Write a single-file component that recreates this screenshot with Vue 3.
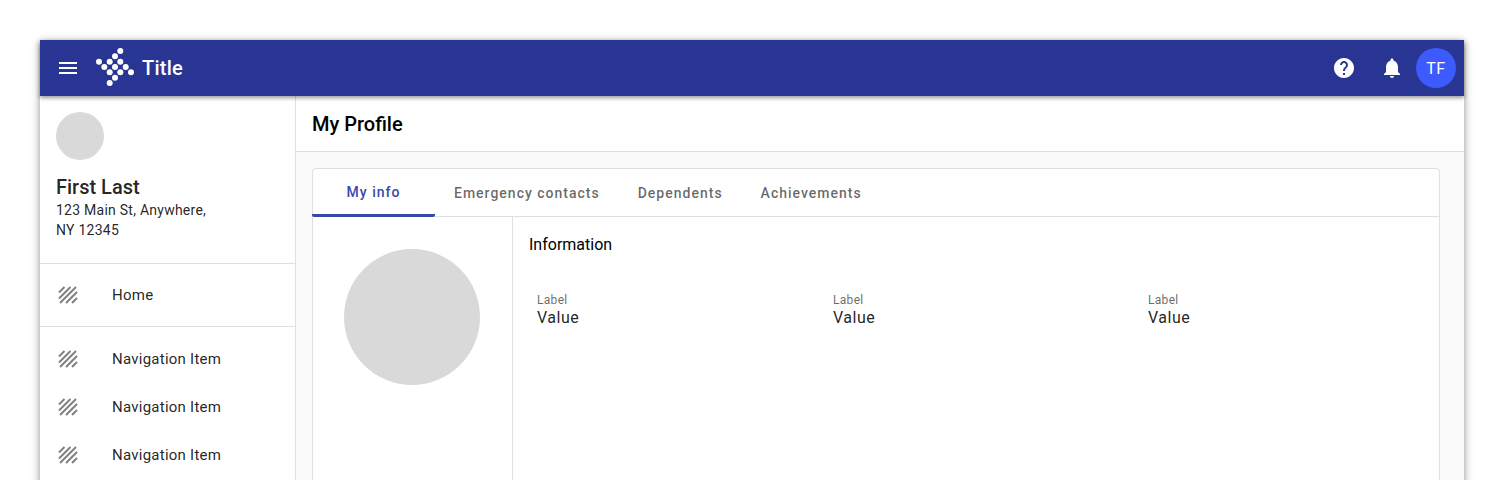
<script setup>
const navItems = ['Navigation Item', 'Navigation Item', 'Navigation Item', 'Navigation Item']
const tabs = ['My info', 'Emergency contacts', 'Dependents', 'Achievements']
const fields = [
  { label: 'Label', value: 'Value', width: '296px' },
  { label: 'Label', value: 'Value', width: '315px' },
  { label: 'Label', value: 'Value', width: '200px' }
]
const dots = [
  [24.3, 11], [19, 16.3], [13.7, 21.7], [3, 21.7], [8.3, 27], [24.3, 21.7], [29.7, 27],
  [19, 27], [13.7, 32.3], [24.3, 32.3], [19, 37.7], [13.7, 43], [35, 32.3]
]
</script>

<template>
  <div class="page">
    <div class="shell">
      <header class="topbar">
        <svg class="menu" width="24" height="24" viewBox="0 0 24 24" fill="#fff"><path d="M3 18h18v-2H3v2zm0-5h18v-2H3v2zm0-7v2h18V6H3z"/></svg>
        <svg class="logo" width="40" height="40" viewBox="0 8 40 40" fill="#fff">
          <circle v-for="(d, i) in dots" :key="i" :cx="d[0]" :cy="d[1]" r="3"/>
        </svg>
        <span class="app-title">Title</span>
        <span class="spacer"></span>
        <svg class="action" width="24" height="24" viewBox="0 0 24 24" fill="#fff"><path d="M12 2C6.48 2 2 6.48 2 12s4.48 10 10 10 10-4.48 10-10S17.52 2 12 2zm1 17h-2v-2h2v2zm2.07-7.75l-.9.92C13.45 12.9 13 13.5 13 15h-2v-.5c0-1.1.45-2.1 1.17-2.83l1.24-1.26c.37-.36.59-.86.59-1.41 0-1.1-.9-2-2-2s-2 .9-2 2H8c0-2.21 1.79-4 4-4s4 1.79 4 4c0 .88-.36 1.68-.93 2.25z"/></svg>
        <svg class="action bell" width="24" height="24" viewBox="0 0 24 24" fill="#fff"><path d="M12 22c1.1 0 2-.9 2-2h-4c0 1.1.89 2 2 2zm6-6v-5c0-3.07-1.64-5.64-4.5-6.32V4c0-.83-.67-1.5-1.5-1.5s-1.5.67-1.5 1.5v.68C7.63 5.36 6 7.92 6 11v5l-2 2v1h16v-1l-2-2z"/></svg>
        <div class="user">TF</div>
      </header>

      <div class="body">
        <aside class="sidebar">
          <section class="profile">
            <div class="profile-avatar"></div>
            <div class="name">First Last</div>
            <div class="address">123 Main St, Anywhere,<br />NY 12345</div>
          </section>
          <div class="home-row">
            <svg class="hatch" width="20" height="18" viewBox="0 0 20 18"><path d="M1 6.5L6.5 1M1 12.5L12.5 1M2 17L18 1M8 17L19 6M14 17L19 12" stroke="#808080" stroke-width="2" fill="none"/></svg>
            <span>Home</span>
          </div>
          <nav class="nav">
            <div v-for="(item, i) in navItems" :key="i" class="nav-row">
              <svg class="hatch" width="20" height="18" viewBox="0 0 20 18"><path d="M1 6.5L6.5 1M1 12.5L12.5 1M2 17L18 1M8 17L19 6M14 17L19 12" stroke="#808080" stroke-width="2" fill="none"/></svg>
              <span>{{ item }}</span>
            </div>
          </nav>
        </aside>

        <main class="main">
          <div class="page-head">My Profile</div>
          <div class="content">
            <div class="card">
              <div class="tabs">
                <div v-for="(t, i) in tabs" :key="t" class="tab" :class="{ active: i === 0 }">{{ t }}</div>
              </div>
              <div class="card-body">
                <div class="photo-col"><div class="photo"></div></div>
                <div class="info-col">
                  <div class="info-title">Information</div>
                  <div class="fields">
                    <div v-for="(f, i) in fields" :key="i" class="field" :style="{ width: f.width }">
                      <div class="label">{{ f.label }}</div>
                      <div class="value">{{ f.value }}</div>
                    </div>
                  </div>
                </div>
              </div>
            </div>
          </div>
        </main>
      </div>
    </div>
  </div>
</template>

<style>
html, body { margin: 0; background: #fff; overflow: hidden; }
</style>

<style scoped>
.page {
  height: 480px;
  box-sizing: border-box;
  padding: 40px 40px 0;
  overflow: hidden;
  font-family: Roboto, "Liberation Sans", sans-serif;
  color: rgba(0, 0, 0, 0.87);
  -webkit-font-smoothing: antialiased;
}
.shell {
  height: 640px;
  display: flex;
  flex-direction: column;
  background: #fff;
  box-shadow: 0 2px 8px rgba(0, 0, 0, 0.45);
}
.topbar {
  height: 56px;
  flex: none;
  display: flex;
  align-items: center;
  background: #283593;
  color: #fff;
  padding: 0 8px 0 16px;
  box-shadow: 0 2px 4px rgba(0, 0, 0, 0.4);
  position: relative;
  z-index: 1;
}
.logo { margin-left: 16px; }
.app-title { font-size: 20px; font-weight: 500; margin-left: 6px; letter-spacing: 0.25px; }
.spacer { flex: 1; }
.bell { margin-left: 24px; margin-right: 12px; }
.user {
  width: 40px;
  height: 40px;
  border-radius: 50%;
  background: #3d5afe;
  display: flex;
  align-items: center;
  justify-content: center;
  font-size: 16px;
  letter-spacing: 0.5px;
}
.body { flex: 1; display: flex; min-height: 0; }
.sidebar {
  width: 256px;
  flex: none;
  box-sizing: border-box;
  border-right: 1px solid #e0e0e0;
  font-size: 15px;
}
.profile {
  height: 168px;
  box-sizing: border-box;
  padding: 16px;
  border-bottom: 1px solid #e0e0e0;
}
.profile-avatar { width: 48px; height: 48px; border-radius: 50%; background: #d9d9d9; }
.name { font-size: 20px; font-weight: 500; line-height: 24px; margin-top: 15px; }
.address { font-size: 14px; line-height: 20px; margin-top: 1px; letter-spacing: 0.25px; }
.home-row {
  height: 63px;
  box-sizing: border-box;
  display: flex;
  align-items: center;
  padding-left: 18px;
  border-bottom: 1px solid #e0e0e0;
  letter-spacing: 0.25px;
}
.nav { padding-top: 8px; }
.nav-row {
  height: 48px;
  display: flex;
  align-items: center;
  padding-left: 18px;
  letter-spacing: 0.25px;
}
.hatch { margin-right: 34px; flex: none; }
.main { flex: 1; min-width: 0; display: flex; flex-direction: column; }
.page-head {
  height: 56px;
  box-sizing: border-box;
  flex: none;
  padding: 0 16px;
  display: flex;
  align-items: center;
  font-size: 20px;
  font-weight: 500;
  color: #000;
  border-bottom: 1px solid #e0e0e0;
}
.content { flex: 1; background: #fafafa; padding: 16px 24px 16px 16px; }
.card {
  background: #fff;
  border: 1px solid #e0e0e0;
  border-radius: 4px;
  height: 100%;
  box-sizing: border-box;
}
.tabs { display: flex; height: 47px; border-bottom: 1px solid #e0e0e0; margin-left: -1px; }
.tab {
  height: 48px;
  box-sizing: border-box;
  padding: 0 19px 1px;
  display: flex;
  align-items: center;
  font-size: 14px;
  font-weight: 500;
  letter-spacing: 1px;
  color: rgba(0, 0, 0, 0.6);
}
.tab.active {
  width: 123px;
  justify-content: center;
  color: #3949ab;
  border-bottom: 3px solid #3949ab;
  border-radius: 0 0 2px 2px;
  padding-top: 2px;
}
.card-body { display: flex; height: calc(100% - 48px); }
.photo-col {
  width: 200px;
  box-sizing: border-box;
  flex: none;
  border-right: 1px solid #e0e0e0;
  padding: 32px 31px;
}
.photo { width: 136px; height: 136px; border-radius: 50%; background: #d9d9d9; }
.info-col { flex: 1; padding: 16px 16px; }
.info-title { font-size: 16px; line-height: 24px; color: #000; }
.fields { display: flex; margin-top: 35px; padding-left: 8px; }
.label { font-size: 12px; line-height: 16px; color: rgba(0, 0, 0, 0.6); letter-spacing: 0.3px; }
.value { font-size: 16px; line-height: 20px; letter-spacing: 0.5px; }
</style>
